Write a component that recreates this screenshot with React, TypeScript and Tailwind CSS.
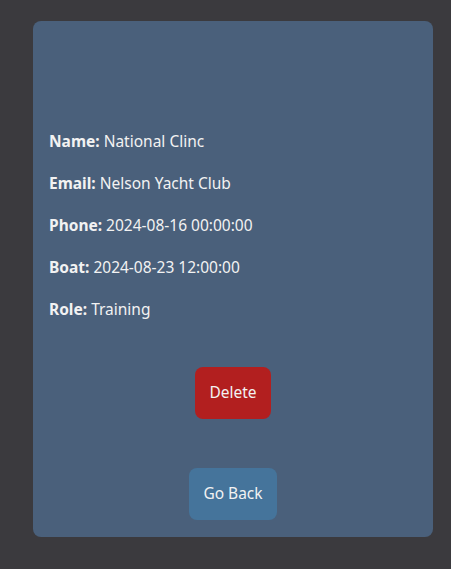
const rows: [string, string][] = [
  ["Name:", "National Clinc"],
  ["Email:", "Nelson Yacht Club"],
  ["Phone:", "2024-08-16 00:00:00"],
  ["Boat:", "2024-08-23 12:00:00"],
  ["Role:", "Training"],
];

export default function App() {
  return (
    <div
      className="min-h-[569px] bg-[#3b3a3e] pt-[21px] pl-[33px]"
      style={{ fontFamily: '"Noto Sans", "Open Sans", sans-serif' }}
    >
      <div className="flex w-[400px] flex-col rounded-lg bg-[#4a607b] px-4 pt-[108px] pb-[17px] text-[15.5px] text-[#f2f2f2]">
        <div className="flex flex-col gap-[18px]">
          {rows.map(([label, value]) => (
            <p key={label} className="leading-6">
              <strong className="font-bold">{label}</strong> {value}
            </p>
          ))}
        </div>
        <div className="mt-[46px] flex justify-center">
          <button className="h-[52px] rounded-lg bg-[#b21f1f] px-[14px] text-[#f2f2f2]">
            Delete
          </button>
        </div>
        <div className="mt-[49px] flex justify-center">
          <button className="h-[52px] rounded-lg bg-[#45749b] px-[14px] text-[#f2f2f2]">
            Go Back
          </button>
        </div>
      </div>
    </div>
  );
}
